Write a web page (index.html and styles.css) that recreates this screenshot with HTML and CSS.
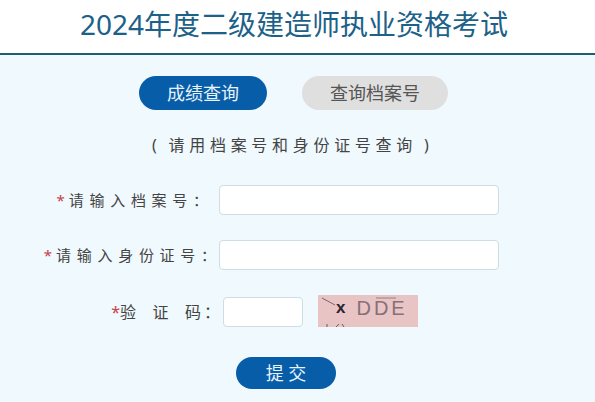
FILE: index.html
```html
<!DOCTYPE html>
<html lang="zh-CN">
<head>
<meta charset="utf-8">
<title>2024年度二级建造师执业资格考试</title>
<link rel="stylesheet" href="styles.css">
</head>
<body>
<header class="header"><h1 class="title">2024年度二级建造师执业资格考试</h1></header>
<main class="main">
  <div class="tabs">
    <a class="tab tab-active">成绩查询</a>
    <a class="tab tab-idle">查询档案号</a>
  </div>
  <p class="hint">( 请用档案号和身份证号查询 )</p>
  <form class="form">
    <div class="row">
      <label class="label label-one"><span class="star">*</span><span class="spaced">请输入档案号：</span></label>
      <input class="input input-wide" type="text">
    </div>
    <div class="row">
      <label class="label label-two"><span class="star">*</span><span class="spaced">请输入身份证号：</span></label>
      <input class="input input-wide" type="text">
    </div>
    <div class="row row-code">
      <label class="label label-code"><span class="star star-code">*</span><span class="spaced-code">验证</span><span class="code-last">码</span>：</label>
      <input class="input input-code" type="text">
      <div class="captcha">
        <svg class="captcha-noise" viewBox="0 0 100 32" width="100" height="32"><path d="M4 3 L17 10" stroke="#4a3c44" stroke-width="0.7" fill="none"/><path d="M58 3 H78" stroke="#9a7f80" stroke-width="1" fill="none"/><path d="M9 32 V29 M18 32 L21 29 M24 29 L26 32" stroke="#6b5a60" stroke-width="1" fill="none"/></svg>
        <span class="cap-x">x</span><span class="cap-d">DDE</span>
      </div>
    </div>
    <button class="submit" type="button">提 交</button>
  </form>
</main>
</body>
</html>
```
FILE: styles.css
```css
* { box-sizing: border-box; }
html, body { margin: 0; padding: 0; height: 100%; overflow: hidden; }
body {
  background: #f0f9fd;
  font-family: "Noto Sans", "Noto Sans CJK SC", sans-serif;
  color: #444;
}
.header {
  height: 55px;
  background: #fff;
  border-bottom: 2px solid #1f5f74;
  display: flex;
  justify-content: center;
  align-items: flex-start;
  padding-right: 7px;
}
.title {
  margin: 0;
  font-size: 28px;
  font-weight: 400;
  line-height: 48px;
  color: #1c6188;
  white-space: nowrap;
}
.main { display: flex; flex-direction: column; align-items: stretch; padding-top: 21px; }
.tabs { display: flex; padding-left: 139px; gap: 35px; }
.tab {
  height: 34px;
  border-radius: 17px;
  font-size: 18px;
  line-height: 34px;
  text-align: center;
}
.tab-active { width: 128px; background: #075da8; color: #e8f4fb; }
.tab-idle { width: 146px; background: #dfdfdf; color: #555; }
.hint {
  margin: 24px 0 0;
  padding-left: 152px;
  font-size: 16px;
  line-height: 22px;
  letter-spacing: 4.7px;
  word-spacing: -1.8px;
  color: #444;
  white-space: nowrap;
}
.form { display: flex; flex-direction: column; margin-top: 29px; }
.row { display: flex; align-items: center; height: 30px; margin-bottom: 25px; }
.label {
  width: 219px;
  text-align: right;
  font-size: 15px;
  line-height: 30px;
  align-self: flex-start;
  white-space: nowrap;
}
.label-one { padding-right: 11px; }
.label-two { padding-right: 3px; }
.star { color: #c9404a; margin-right: 4px; }
.spaced { letter-spacing: 5.7px; margin-right: -5.7px; }
.row-code { margin-top: 1px; height: 32px; }
.label-code { width: 223px; padding-right: 3px; font-size: 16px; line-height: 32px; }
.star-code { margin-right: 0; }
.spaced-code { letter-spacing: 16.5px; }
.code-last { letter-spacing: 3px; }
.input {
  height: 30px;
  background: #fff;
  border: 1px solid #cddde4;
  border-radius: 4px;
  outline: none;
}
.input-wide { width: 280px; }
.input-code { width: 80px; }
.captcha {
  position: relative;
  width: 100px;
  height: 32px;
  margin-left: 15px;
  margin-top: -2px;
  background: #e8c4c5;
  display: flex;
  align-items: center;
  padding: 0 0 6px 18px;
  font-family: "Liberation Sans", sans-serif;
  font-size: 20px;
  line-height: 26px;
  overflow: hidden;
}
.captcha-noise { position: absolute; left: 0; top: 0; }
.cap-x { color: #2a2230; font-weight: 700; font-size: 17px; }
.cap-d { color: #85707a; margin-left: 11px; letter-spacing: 3px; }
.submit {
  align-self: flex-start;
  margin: 4px 0 0 236px;
  width: 100px;
  height: 32px;
  border: none;
  border-radius: 16px;
  background: #075da8;
  color: #e8f4fb;
  font-family: inherit;
  font-size: 18px;
  line-height: 32px;
  padding: 0;
}
```
